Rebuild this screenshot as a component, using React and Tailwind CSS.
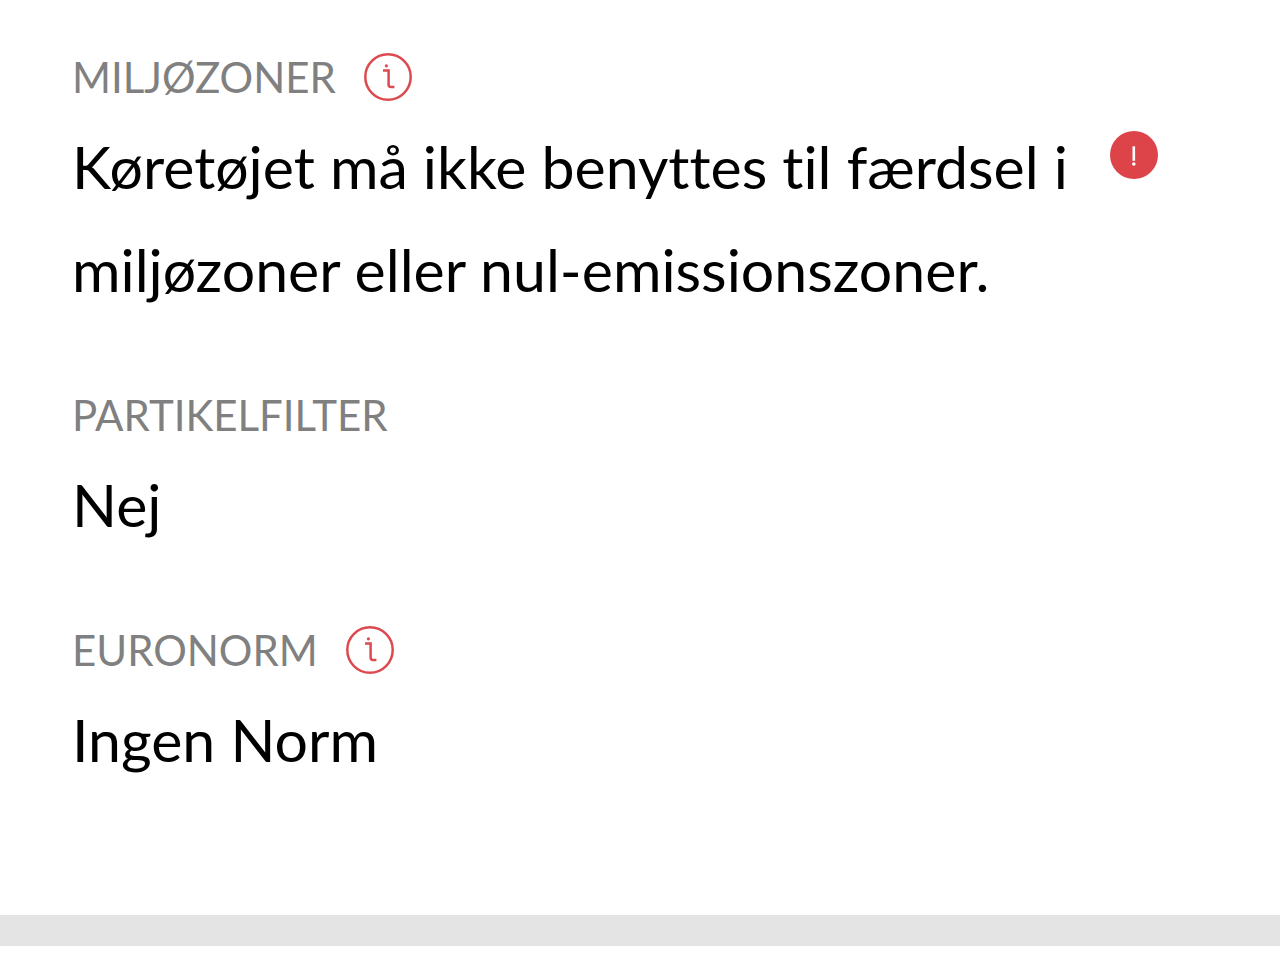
function InfoIcon() {
  return (
    <svg className="size-12" viewBox="0 0 48 48" fill="none" stroke="#dc4a50" strokeWidth="2.5" aria-hidden="true">
      <circle cx="24" cy="24" r="22.7" />
      <circle cx="22.4" cy="12.8" r="1.6" fill="#dc4a50" stroke="none" />
      <path d="M19 17.600h5.600v14q0 2.500 2.500 2.500h3.300" />
    </svg>
  );
}

function AlertIcon() {
  return (
    <svg className="mt-4 size-12 shrink-0" viewBox="0 0 48 48" role="img" aria-label="Advarsel">
      <circle cx="24" cy="24" r="24" fill="#dc4449" />
      <path d="M23.800 15.300v14.500" stroke="#fff" strokeWidth="2.600" />
      <circle cx="23.800" cy="33" r="1.800" fill="#fff" />
    </svg>
  );
}

const FIELDS = [
  {
    label: "Miljøzoner",
    value: "Køretøjet må ikke benyttes til færdsel i miljøzoner eller nul-emissionszoner.",
    info: true,
    alert: true,
  },
  { label: "Partikelfilter", value: "Nej" },
  { label: "Euronorm", value: "Ingen Norm", info: true },
];

function Field({ label, value, info, alert }) {
  return (
    <div>
      <dt className="flex h-14 items-center gap-7 text-[42px] uppercase text-[#808080]">
        {label}
        {info && (
          <button type="button" aria-label={`Mere om ${label}`}>
            <InfoIcon />
          </button>
        )}
      </dt>
      <dd className="mt-2.5 flex items-start gap-8 text-[59px] leading-[103px] text-black">
        <span className="max-w-[1006px]">{value}</span>
        {alert && <AlertIcon />}
      </dd>
    </div>
  );
}

export default function App() {
  return (
    <main className="bg-white font-[Lato,sans-serif] [font-variant-ligatures:none]">
      <dl className="flex flex-col gap-[66px] px-18 pt-[49px] pb-31">
        {FIELDS.map((field) => (
          <Field key={field.label} {...field} />
        ))}
      </dl>
      <hr className="h-[31px] border-0 bg-[#e4e4e4]" />
    </main>
  );
}
